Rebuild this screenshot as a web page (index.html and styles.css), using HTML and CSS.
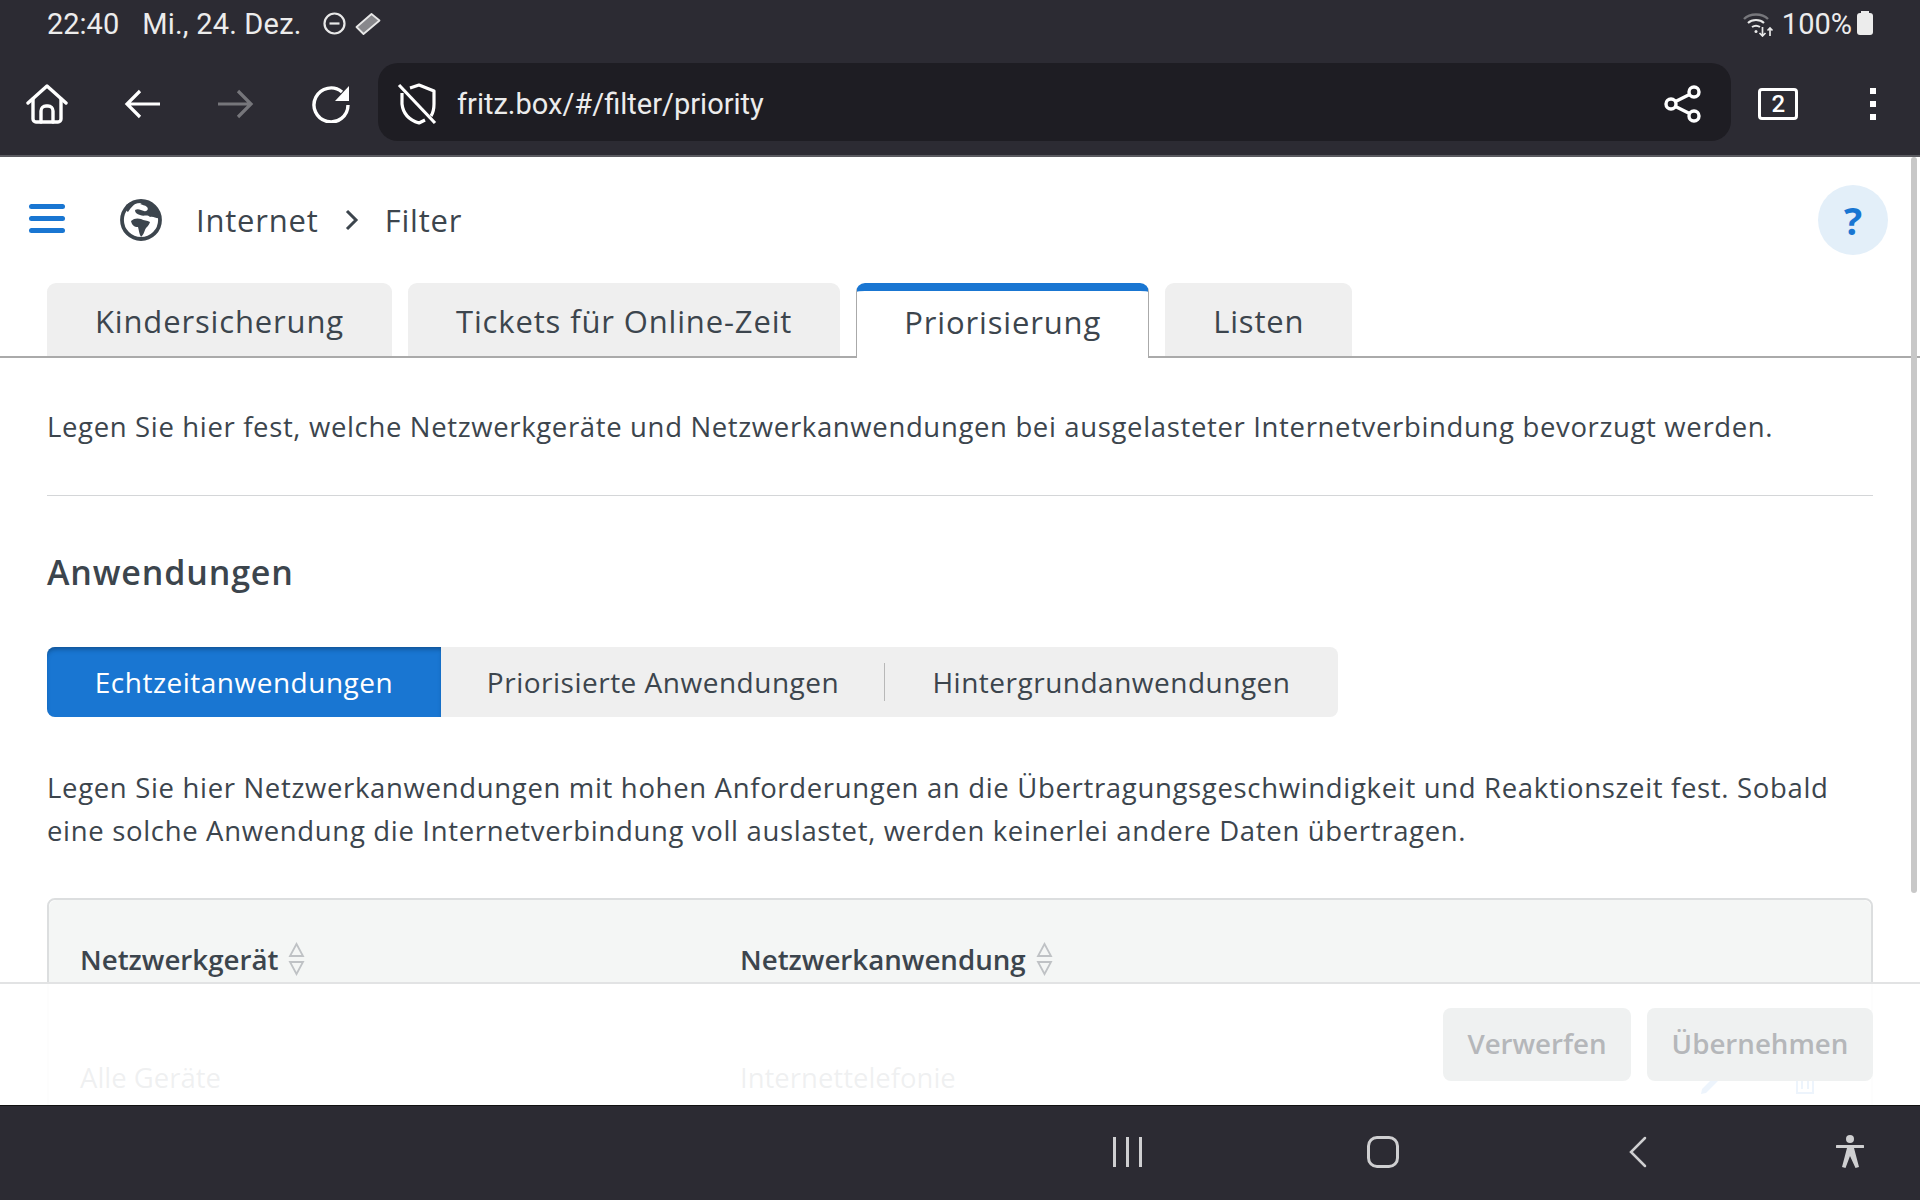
FILE: index.html
```html
<!DOCTYPE html>
<html lang="de">
<head>
    <meta charset="UTF-8">
    <title>FRITZ!Box - Priorisierung</title>
    <link rel="stylesheet" href="styles.css">
</head>
<body>
    <header class="chrome">
        <div class="status-bar">
            <span class="status-time">22:40</span>
            <span class="status-date">Mi., 24. Dez.</span>
            <svg class="status-icon" width="23" height="23" viewBox="0 0 23 23"><circle cx="11.500" cy="11.500" r="10" fill="none" stroke="#e8e8e8" stroke-width="2.200"/><path d="M6.500 11.500h10" stroke="#e8e8e8" stroke-width="2.200"/></svg>
            <svg class="status-icon" width="26" height="24" viewBox="0 0 26 24"><path d="M16.500 2 24.500 8.500 8.500 22 1.500 15z" fill="#88888c" stroke="#e8e8e8" stroke-width="1.800" stroke-linejoin="round"/></svg>
            <span class="status-right">
                <svg width="33" height="26" viewBox="0 0 33 26" fill="none" stroke="#e8e8e8" stroke-width="2"><path d="M2 8C8 2 20 2 26 8" stroke="#77777c" stroke-width="2.400"/><path d="M6 12C10 8 18 8 22 12"/><path d="M10 16c3-2 5-2 8 0"/><circle cx="14" cy="20.500" r="1.500" fill="#e8e8e8" stroke="none"/><path d="M20.500 16v9M17.500 22l3 3 3-3M28 25v-8M25.500 19.500l2.500-2.500 2.500 2.500" stroke-width="1.700"/></svg>
                <span class="status-battery-text">100%</span>
                <span class="battery"></span>
            </span>
        </div>
        <div class="toolbar">
            <button class="tool-btn">
                <svg width="42" height="40" viewBox="0 0 42 40" fill="none" stroke="#fff" stroke-width="3.400" stroke-linejoin="round" stroke-linecap="round"><path d="M2 19 21 2l19 17"/><path d="M7 15v20a3 3 0 0 0 3 3h22a3 3 0 0 0 3-3V15"/><path d="M15 38V27a5 5 0 0 1 5-5h2a5 5 0 0 1 5 5v11"/></svg>
            </button>
            <button class="tool-btn">
                <svg width="36" height="30" viewBox="0 0 36 30" fill="none" stroke="#fff" stroke-width="3.200"><path d="M16 2 3 15l13 13M3 15h33"/></svg>
            </button>
            <button class="tool-btn">
                <svg width="36" height="30" viewBox="0 0 36 30" fill="none" stroke="#76767b" stroke-width="3.200"><path d="M20 2l13 13-13 13M33 15H0"/></svg>
            </button>
            <button class="tool-btn">
                <svg width="40" height="38" viewBox="0 0 40 38" fill="none"><path d="M31 7A17 17 0 1 0 37 20" stroke="#fff" stroke-width="3.400"/><path d="M38 1v15H24z" fill="#fff"/></svg>
            </button>
            <div class="address-bar">
                <svg class="shield" width="40" height="42" viewBox="0 0 40 42" fill="none" stroke="#fff" stroke-width="3.200" stroke-linejoin="round"><path d="M2 2l36 38"/><path d="M13 5l9-3 15 6v13c0 5-1 9-3 12M28 37l-6 3C12 37 6 30 5 21V10"/></svg>
                <span class="address-text">fritz.box/#/filter/priority</span>
                <svg class="share" width="38" height="38" viewBox="0 0 38 38" fill="none" stroke="#fff" stroke-width="3.400"><circle cx="7" cy="19" r="5"/><circle cx="30" cy="7" r="5"/><circle cx="30" cy="31" r="5"/><path d="M11.500 16.500 25.500 9.500M11.500 21.500 25.500 28.500"/></svg>
            </div>
            <button class="tool-btn">
                <span class="tab-count">2</span>
            </button>
            <button class="tool-btn">
                <span class="kebab"><i></i><i></i><i></i></span>
            </button>
        </div>
    </header>

    <main class="page">
        <div class="breadcrumb-row">
            <span class="hamburger"><i></i><i></i><i></i></span>
            <svg class="globe" width="42" height="42" viewBox="0 0 42 42">
                <circle cx="21" cy="21" r="19" fill="#fff" stroke="#3c454d" stroke-width="3.800"/>
                <path d="M25 2C32 4 38 10 40 19 36 20 34 17 30 18 27 15 24 18 20 16 17 15 15 14 15 11 18 9 21 11 24 12 27 13 29 10 27 8 25 6 22 6 20 5z" fill="#3c454d"/>
                <path d="M6 6C10 3 14 2 18 2 15 5 11 8 8 13 6 12 5 9 6 6z" fill="#3c454d"/>
                <path d="M11 22C14 19 18 19 21 20 24 22 27 21 30 23 29 27 26 28 25 31 24 34 23 36 21 38 19 35 19 31 18 28 14 28 12 26 11 22z" fill="#3c454d"/>
            </svg>
            <nav class="breadcrumb">
                <span>Internet</span>
                <svg class="crumb-sep" width="14" height="22" viewBox="0 0 14 22" fill="none" stroke="#3c454d" stroke-width="3"><path d="M2 2l9 9-9 9"/></svg>
                <span>Filter</span>
            </nav>
            <button class="help-btn">?</button>
        </div>

        <div class="tabs">
            <a class="tab">Kindersicherung</a>
            <a class="tab">Tickets für Online-Zeit</a>
            <a class="tab active">Priorisierung</a>
            <a class="tab">Listen</a>
        </div>

        <section class="content">
            <p class="intro">Legen Sie hier fest, welche Netzwerkgeräte und Netzwerkanwendungen bei ausgelasteter Internetverbindung bevorzugt werden.</p>
            <h2>Anwendungen</h2>
            <div class="segments">
                <a class="segment active">Echtzeitanwendungen</a>
                <a class="segment second">Priorisierte Anwendungen</a>
                <a class="segment third">Hintergrundanwendungen</a>
            </div>
            <p class="desc">Legen Sie hier Netzwerkanwendungen mit hohen Anforderungen an die Übertragungsgeschwindigkeit und Reaktionszeit fest. Sobald eine solche Anwendung die Internetverbindung voll auslastet, werden keinerlei andere Daten übertragen.</p>

            <div class="table">
                <div class="table-head">
                    <div class="col-device">Netzwerkgerät
                        <svg class="sort" width="17" height="34" viewBox="0 0 17 34" fill="none" stroke="#bfc2c5" stroke-width="1.800"><path d="M8.500 2 15 14H2zM8.500 32 2 20h13z"/></svg>
                    </div>
                    <div class="col-app">Netzwerkanwendung
                        <svg class="sort" width="17" height="34" viewBox="0 0 17 34" fill="none" stroke="#bfc2c5" stroke-width="1.800"><path d="M8.500 2 15 14H2zM8.500 32 2 20h13z"/></svg>
                    </div>
                </div>
                <div class="table-row">
                    <div class="col-device">Alle Geräte</div>
                    <div class="col-app">Internettelefonie</div>
                    <div class="row-actions">
                        <svg width="20" height="40" viewBox="0 0 20 40" fill="#1976d2"><path d="M2 24l13-13 4 4L6 28l-5 1z"/></svg>
                        <svg width="22" height="40" viewBox="0 0 22 40" fill="none" stroke="#1976d2" stroke-width="2"><path d="M1 10h20M3 10v18h16V10M8 14v10M14 14v10"/></svg>
                    </div>
                </div>
            </div>
        </section>

        <div class="scrollbar"></div>

        <div class="action-bar">
            <button class="action-btn">Verwerfen</button>
            <button class="action-btn wide">Übernehmen</button>
        </div>
    </main>

    <footer class="nav-bar">
        <span class="nav-bars"><i></i><i></i><i></i></span>
        <span class="nav-home"></span>
        <svg class="nav-back" width="18" height="32" viewBox="0 0 18 32" fill="none" stroke="#cfcfd1" stroke-width="2.500" stroke-linecap="round"><path d="M16 2 2 16l14 14"/></svg>
        <svg class="nav-person" width="28" height="34" viewBox="0 0 28 34" fill="#cfcfd1"><circle cx="14" cy="4" r="4"/><path d="M1 10h26a1.500 1.500 0 0 1 0 3h-9l5 19-3.500 1L14 21 9.500 33 6 32l5-19H1a1.500 1.500 0 0 1 0-3z"/></svg>
    </footer>
</body>
</html>
```

FILE: styles.css
```css
* {
    box-sizing: border-box;
}
html, body {
    height: 100%;
}
body {
    margin: 0;
    display: flex;
    flex-direction: column;
    overflow: hidden;
    font-family: "Open Sans", "Liberation Sans", sans-serif;
    color: #3c454d;
    background-color: #fff;
}
button {
    font-family: inherit;
    border: none;
    background: none;
    padding: 0;
}

/* browser chrome */
.chrome {
    flex: none;
    background-color: #2c2b33;
    font-family: Roboto, sans-serif;
    color: #ececec;
    border-bottom: 2px solid #5a5a60;
}
.status-bar {
    height: 49px;
    display: flex;
    align-items: center;
    padding: 0 47px 2px;
    font-size: 29px;
}
.status-date {
    margin-left: 23px;
    margin-right: 21px;
    letter-spacing: 0.2px;
}
.status-icon {
    margin-right: 9px;
}
.status-right {
    margin-left: auto;
    display: flex;
    align-items: center;
}
.status-battery-text {
    margin: 0 5px 0 7px;
}
.battery {
    width: 16px;
    height: 22px;
    background-color: #ececec;
    border-radius: 3px;
    position: relative;
}
.battery::before {
    content: "";
    position: absolute;
    top: -2px;
    left: 4px;
    width: 8px;
    height: 3px;
    background-color: #ececec;
}
.toolbar {
    height: 106px;
    display: flex;
    align-items: center;
    padding-top: 4px;
}
.tool-btn {
    width: 94.5px;
    flex: none;
    display: flex;
    align-items: center;
    justify-content: center;
}
.address-bar {
    flex: 1;
    height: 78px;
    margin-top: -4px;
    background-color: #1e1d23;
    border-radius: 20px;
    display: flex;
    align-items: center;
    padding: 4px 29px 0 19px;
}
.address-text {
    margin-left: 20px;
    font-size: 29px;
    color: #ececec;
}
.share {
    margin-left: auto;
}
.tab-count {
    width: 40px;
    height: 32px;
    border: 3px solid #fff;
    border-radius: 4px;
    color: #fff;
    font-family: Roboto, sans-serif;
    font-size: 24px;
    font-weight: 500;
    display: flex;
    align-items: center;
    justify-content: center;
}
.kebab {
    display: flex;
    flex-direction: column;
    gap: 7px;
}
.kebab i {
    display: block;
    width: 6px;
    height: 6px;
    background-color: #fff;
}

/* page */
.page {
    flex: 1;
    position: relative;
    overflow: hidden;
    min-height: 0;
}
.breadcrumb-row {
    height: 126px;
    display: flex;
    align-items: center;
    padding: 0 32px 0 29px;
}
.hamburger {
    display: flex;
    flex-direction: column;
    gap: 7px;
    margin-top: -3px;
}
.hamburger i {
    display: block;
    width: 36px;
    height: 5px;
    border-radius: 3px;
    background-color: #1976d2;
}
.globe {
    margin-left: 55px;
}
.breadcrumb {
    margin-left: 34px;
    display: flex;
    align-items: center;
    font-size: 31px;
    letter-spacing: 0.8px;
}
.crumb-sep {
    margin: 0 26px;
}
.help-btn {
    margin-left: auto;
    width: 70px;
    height: 70px;
    border-radius: 50%;
    background-color: #e3eff9;
    color: #1976d2;
    font-size: 38px;
    font-weight: 700;
}
.tabs {
    height: 75px;
    display: flex;
    gap: 16px;
    padding-left: 47px;
    border-bottom: 2px solid #aaa;
}
.tab {
    height: 73px;
    padding: 2px 48px 0;
    background-color: #efefef;
    border-radius: 9px 9px 0 0;
    font-size: 31px;
    letter-spacing: 0.85px;
    display: flex;
    align-items: center;
}
.tab.active {
    height: 75px;
    background-color: #fff;
    border: 1px solid #aaa;
    border-top: 8px solid #1976d2;
    border-bottom: none;
    padding: 0 47px 6px;
}
.content {
    padding: 0 47px;
}
.intro {
    margin: 0;
    height: 138px;
    padding-top: 47px;
    border-bottom: 1px solid #d4d6d8;
    font-size: 27.500px;
    letter-spacing: 0.65px;
    line-height: 43px;
}
h2 {
    margin: 51px 0 0;
    font-size: 34px;
    line-height: 50px;
    font-weight: 600;
    letter-spacing: 0.85px;
}
.segments {
    margin-top: 50px;
    width: 1291px;
    height: 70px;
    display: flex;
    align-items: center;
    background-color: #efefef;
    border-radius: 8px;
    font-size: 28px;
    letter-spacing: 0.5px;
}
.segment {
    height: 100%;
    display: flex;
    align-items: center;
}
.segment.active {
    width: 394px;
    justify-content: center;
    background-color: #1976d2;
    color: #fff;
    border-radius: 8px 0 0 8px;
    box-shadow: inset 0 4px 5px -2px rgba(10, 50, 90, 0.55);
}
.segment.second {
    width: 444px;
    justify-content: center;
    position: relative;
}
.segment.second::after {
    content: "";
    position: absolute;
    right: 0;
    top: 16px;
    bottom: 16px;
    width: 1px;
    background-color: #b8b8b8;
}
.segment.third {
    flex: 1;
    justify-content: center;
}
.desc {
    margin: 49px 0 0;
    font-size: 27.500px;
    letter-spacing: 0.67px;
    line-height: 43px;
}
.table {
    margin-top: 46px;
    border: 2px solid #dcdedf;
    border-radius: 8px 8px 0 0;
}
.table-head {
    height: 118px;
    background-color: #f4f6f5;
    display: flex;
    padding: 0 31px;
    align-items: center;
    font-size: 27.700px;
    font-weight: 600;
    border-radius: 8px 8px 0 0;
}
.table-row {
    height: 118px;
    display: flex;
    align-items: center;
    padding: 0 31px;
    font-size: 27.500px;
}
.col-device {
    width: 660px;
    display: flex;
    align-items: center;
    gap: 10px;
}
.col-app {
    display: flex;
    align-items: center;
    gap: 10px;
}
.row-actions {
    margin-left: auto;
    margin-top: 16px;
    display: flex;
    gap: 74px;
    padding-right: 24px;
}
.scrollbar {
    position: absolute;
    top: 0;
    right: 3px;
    width: 6px;
    height: 736px;
    background-color: #c8c8c8;
    border-radius: 3px;
}
.action-bar {
    position: absolute;
    left: 0;
    right: 0;
    bottom: 0;
    height: 123px;
    background-color: rgba(255, 255, 255, 0.92);
    border-top: 2px solid #e2e3e4;
    display: flex;
    justify-content: flex-end;
    align-items: flex-start;
    gap: 16px;
    padding: 24px 47px 0 0;
}
.action-btn {
    width: 188px;
    height: 73px;
    padding-bottom: 3px;
    border-radius: 8px;
    background-color: #eff1f1;
    color: #b5b7ba;
    font-size: 27.700px;
    font-weight: 600;
}
.action-btn.wide {
    width: 226px;
}

/* android nav */
.nav-bar {
    flex: none;
    height: 95px;
    background-color: #2c2b33;
    border-top: 1px solid #111;
    display: flex;
    justify-content: flex-end;
    align-items: center;
    padding: 0 56px 2px 0;
}
.nav-bars {
    display: flex;
    gap: 10px;
    margin-right: 225px;
}
.nav-bars i {
    display: block;
    width: 3px;
    height: 30px;
    background-color: #cfcfd1;
}
.nav-home {
    width: 32px;
    height: 32px;
    border: 3px solid #cfcfd1;
    border-radius: 10px;
    margin-right: 230px;
}
.nav-back {
    margin-right: 189px;
}
```
